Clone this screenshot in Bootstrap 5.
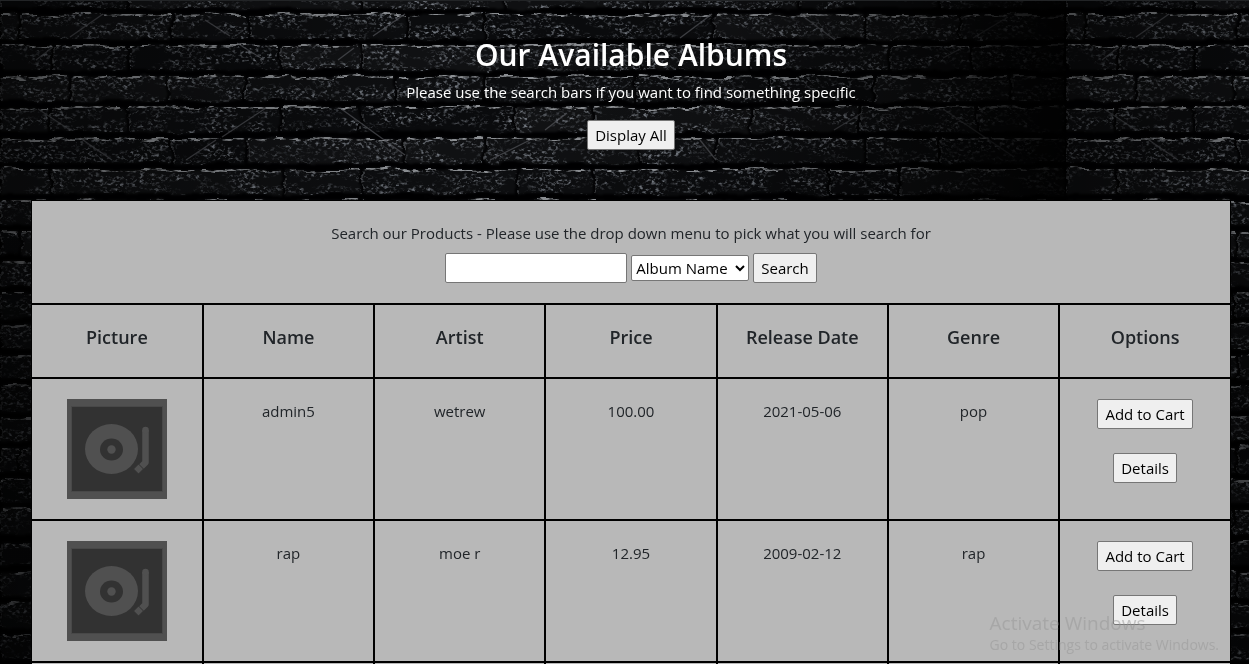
<!DOCTYPE html>
<html lang="en">
<head>
<meta charset="utf-8">
<meta name="viewport" content="width=device-width, initial-scale=1">
<title>Our Available Albums</title>
<link href="https://cdn.jsdelivr.net/npm/bootstrap@5.3.0/dist/css/bootstrap.min.css" rel="stylesheet">
<style>
  body { background: #010102; font-family: "Open Sans", sans-serif; font-size: 15px; line-height: 24px; }
  .wall { position: fixed; inset: 0; z-index: -1; width: 100%; height: 100%; }
  .wall filter { color-interpolation-filters: sRGB; }
  .page { padding: 35px 18px 0 31px; border-top: 1px solid #222426; }
  .page-title { font-size: 30px; font-weight: 600; line-height: 38px; margin-bottom: 6px; }
  .plain-btn { height: 30px; padding: 0 7px; border: 1px solid #767676; border-radius: 2px; background: #efefef; color: #000; line-height: 28px; }
  .catalog { margin-top: 50px; background: #b8b8b8; border: 1px solid #000; color: #212529; }
  .catalog-search { padding: 20px; }
  .query { width: 182px; height: 30px; border: 1px solid #767676; border-radius: 2px; }
  .field { width: 118px; height: 26px; border: 1px solid #767676; border-radius: 2px; background: #fff; color: #000; }
  .albums { table-layout: fixed; border-collapse: collapse; width: calc(100% + 2px); margin: 0 -1px; }
  .albums th, .albums td { padding: 20px; border: 2px solid #000; vertical-align: top; }
  .albums tr > :first-child { border-left-width: 1px; }
  .albums tr > :last-child { border-right-width: 1px; }
  .albums th { font-size: 18px; font-weight: 600; padding: 20px 4px 28px; white-space: nowrap; }
  .albums td { height: 142px; }
  .cover { width: 100px; height: 100px; display: block; margin: 0 auto; }
  .notice { position: fixed; right: 30px; bottom: 9px; color: rgba(150,150,150,.5); pointer-events: none; }
  .notice strong { display: block; font-size: 19px; font-weight: 400; line-height: 24px; }
  .notice span { font-size: 14px; line-height: 20px; display: block; }
</style>
</head>
<body class="vh-100 overflow-hidden">
<svg class="wall" aria-hidden="true">
  <defs>
    <filter id="grain" x="0" y="-20" width="1066" height="700" filterUnits="userSpaceOnUse">
      <feTurbulence type="fractalNoise" baseFrequency="0.03 0.08" numOctaves="3" seed="8" result="warp"/>
      <feTurbulence type="fractalNoise" baseFrequency="0.25 0.35" numOctaves="4" seed="21" result="n"/>
      <feColorMatrix in="n" values="0 0 0 0 .46  0 0 0 0 .48  0 0 0 0 .51  3 1.2 0 0 -2.05" result="g"/>
      <feColorMatrix in="warp" values="0 0 0 0 1  0 0 0 0 1  0 0 0 0 1  0 0 4 0 -1.5" result="patches"/>
      <feComposite in="g" in2="patches" operator="in" result="gp"/>
      <feGaussianBlur in="gp" stdDeviation=".5" result="soft"/>
      <feDisplacementMap in="SourceGraphic" in2="warp" scale="9" xChannelSelector="R" yChannelSelector="G" result="s"/>
      <feComposite in="soft" in2="s" operator="in" result="gs"/>
      <feGaussianBlur in="s" stdDeviation="1" result="sb"/>
      <feMerge><feMergeNode in="sb"/><feMergeNode in="gs"/></feMerge>
    </filter>
    <filter id="rough" x="0" y="-20" width="1066" height="700" filterUnits="userSpaceOnUse">
      <feTurbulence type="fractalNoise" baseFrequency="0.03 0.08" numOctaves="3" seed="8" result="warp"/>
      <feTurbulence type="fractalNoise" baseFrequency="0.12 0.3" numOctaves="3" seed="4" result="n"/>
      <feDisplacementMap in="SourceGraphic" in2="warp" scale="9" xChannelSelector="R" yChannelSelector="G" result="d"/>
      <feColorMatrix in="n" values="0 0 0 0 1  0 0 0 0 1  0 0 0 0 1  0 4 0 0 -1.5" result="m"/>
      <feComposite in="d" in2="m" operator="in" result="e"/>
      <feGaussianBlur in="e" stdDeviation=".6"/>
    </filter>
    <linearGradient id="shade">
      <stop offset="0" stop-color="#000" stop-opacity=".5"/><stop offset=".12" stop-color="#000" stop-opacity=".3"/>
      <stop offset=".4" stop-color="#000" stop-opacity="0"/><stop offset=".65" stop-color="#000" stop-opacity=".05"/>
      <stop offset=".84" stop-color="#000" stop-opacity=".45"/><stop offset=".93" stop-color="#000" stop-opacity=".75"/><stop offset="1" stop-color="#000" stop-opacity=".9"/>
    </linearGradient>
    <linearGradient id="fade" x2="0" y2="1">
      <stop offset=".3" stop-color="#000" stop-opacity="0"/><stop offset=".5" stop-color="#000" stop-opacity=".4"/>
    </linearGradient>
    <pattern id="bricks" width="1066" height="700" patternUnits="userSpaceOnUse">
      <g id="courses"></g>
      <path stroke="#5a5d62" stroke-width="1.3" opacity=".65" fill="none" d="M70 37L103 14M205 20L230 36M237 43L264 60M36 60L53 47M373 36L405 14M338 60L354 48M38 109L70 130M80 138L112 160M222 137L266 108M186 160L216 140M340 108L405 155M680 38L712 14M800 14L835 40M973 38L1008 17M943 58L962 48M834 130L862 113M943 109L1014 157M490 160L530 140M545 130L567 113M700 140L716 160"/>
      <rect width="1066" height="700" fill="url(#shade)"/>
    </pattern>
  </defs>
  <rect width="100%" height="100%" fill="url(#bricks)"/>
  <rect width="100%" height="100%" fill="url(#fade)"/>
</svg>

<main class="page">
  <header class="text-center text-white">
    <h1 class="page-title">Our Available Albums</h1>
    <p class="mb-3">Please use the search bars if you want to find something specific</p>
    <button type="button" class="plain-btn">Display All</button>
  </header>

  <section class="catalog text-center">
    <form class="catalog-search" onsubmit="return false">
      <p class="mb-2" id="search-help">Search our Products - Please use the drop down menu to pick what you will search for</p>
      <div class="d-flex justify-content-center align-items-center gap-1">
        <input type="text" class="query" aria-labelledby="search-help">
        <select class="field" aria-label="Search by"><option>Album Name</option></select>
        <button type="submit" class="plain-btn">Search</button>
      </div>
    </form>
    <table class="albums">
      <thead>
        <tr><th>Picture</th><th>Name</th><th>Artist</th><th>Price</th><th>Release Date</th><th>Genre</th><th>Options</th></tr>
      </thead>
      <tbody>
        <tr>
          <td>
            <svg class="cover" viewBox="0 0 100 100" role="img" aria-label="Album cover">
              <g id="turntable"><path fill="#505050" d="M0 0h100v100H0z"/><path fill="#323232" stroke="#484848" d="M4.500 7.500h91v85h-91z"/><ellipse cx="44.500" cy="50" rx="26.500" ry="25" fill="#505050"/><ellipse cx="44.500" cy="50.500" rx="11.500" ry="11" fill="#323232"/><circle cx="44.500" cy="50.500" r="4.200" fill="#505050"/><path d="M78.500 31V63.500L74 68" stroke="#505050" stroke-width="6.500" fill="none" stroke-linejoin="round"/><circle cx="78.500" cy="31" r="3.250" fill="#505050"/><path fill="#505050" stroke="#323232" d="M71.500 65l5 5-5 5-5-5z"/></g>
            </svg>
          </td>
          <td>admin5</td><td>wetrew</td><td>100.00</td><td>2021-05-06</td><td>pop</td>
          <td><div class="d-flex flex-column align-items-center gap-4"><button type="button" class="plain-btn">Add to Cart</button><button type="button" class="plain-btn">Details</button></div></td>
        </tr>
        <tr>
          <td><svg class="cover" viewBox="0 0 100 100" role="img" aria-label="Album cover"><use href="#turntable"/></svg></td>
          <td>rap</td><td>moe r</td><td>12.95</td><td>2009-02-12</td><td>rap</td>
          <td><div class="d-flex flex-column align-items-center gap-4"><button type="button" class="plain-btn">Add to Cart</button><button type="button" class="plain-btn">Details</button></div></td>
        </tr>
        <tr><td></td><td></td><td></td><td></td><td></td><td></td><td></td></tr>
      </tbody>
    </table>
  </section>
</main>
<aside class="notice"><strong>Activate Windows</strong><span>Go to Settings to activate Windows.</span></aside>

<script src="https://cdn.jsdelivr.net/npm/bootstrap@5.3.0/dist/js/bootstrap.bundle.min.js"></script>
<script>
  // Lay the brick courses of the wall: joints per course, repeated down the page.
  const joints = [
    [0, 128, 362, 505, 650, 800, 940, 1066],
    [0, 20, 172, 250, 408, 485, 714, 866, 960, 1066],
    [0, 52, 129, 281, 362, 520, 640, 748, 890, 972, 1066],
    [0, 70, 168, 246, 396, 484, 636, 770, 874, 1010, 1066],
    [0, 50, 128, 281, 361, 517, 594, 752, 860, 977, 1066],
    [0, 172, 248, 405, 486, 640, 716, 866, 940, 1066],
    [0, 52, 284, 362, 518, 594, 829, 900, 1066]
  ];
  let bricks = '', edges = '';
  for (let r = 0; r < 22; r++) {
    const y = -17 + r * 31, row = joints[r % 7];
    for (let i = 0; i < row.length - 1; i++) {
      const x = row[i], w = row[i + 1] - x, tone = 10 + (i * 7 + r * 5) % 8;
      bricks += `<rect x="${x + 1}" y="${y}" width="${w - 3}" height="25" fill="rgb(${tone},${tone + 1},${tone + 3})"/>`;
      edges += `<path d="M${x + 2} ${y + 1}h${w - 5}" stroke="#8d9094" stroke-width="2"/>`;
      edges += `<path d="M${x + 1} ${y + 2}v22" stroke="#4a4d50" stroke-width="1.500"/>`;
    }
  }
  document.getElementById('courses').innerHTML = `<g filter="url(#grain)">${bricks}</g><g filter="url(#rough)">${edges}</g>`;
</script>
</body>
</html>
